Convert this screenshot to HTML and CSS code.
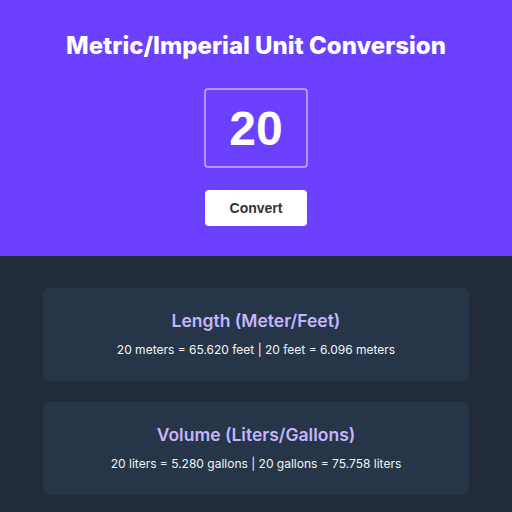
FILE: index.html
```html
<!DOCTYPE html>
<html>
<head>
<meta charset="utf-8">
<link rel="stylesheet" href="styles.css">
</head>
<body>
<header class="hero">
  <h1 class="title">Metric/Imperial Unit Conversion</h1>
  <input class="num" type="text" value="20">
  <button class="btn">Convert</button>
</header>
<main class="results">
  <section class="card">
    <h2 class="card-title">Length (Meter/Feet)</h2>
    <p class="card-text">20 meters = 65.620 feet | 20 feet = 6.096 meters</p>
  </section>
  <section class="card">
    <h2 class="card-title">Volume (Liters/Gallons)</h2>
    <p class="card-text">20 liters = 5.280 gallons | 20 gallons = 75.758 liters</p>
  </section>
</main>
</body>
</html>
```
FILE: styles.css
```css
html, body {
  margin: 0;
  padding: 0;
  background: #222b3a;
  font-family: Inter, "Noto Sans", sans-serif;
}
.hero {
  background: #6c40ff;
  height: 256px;
  box-sizing: border-box;
  padding-top: 31px;
  display: flex;
  flex-direction: column;
  align-items: center;
}
.title {
  margin: 0;
  color: #fff;
  font-size: 24px;
  font-weight: 800;
  line-height: 30px;
}
.num {
  margin-top: 27px;
  width: 104px;
  height: 80px;
  box-sizing: border-box;
  background: transparent;
  border: 2px solid rgba(255,255,255,0.45);
  border-radius: 4px;
  color: #fff;
  text-align: center;
  font-family: "Liberation Sans", Arial, sans-serif;
  font-weight: 700;
  font-size: 48px;
  padding: 0;
  outline: none;
}
.btn {
  margin-top: 22px;
  width: 102px;
  height: 36px;
  background: #fff;
  border: none;
  border-radius: 4px;
  color: #333;
  font-family: "Liberation Sans", Arial, sans-serif;
  font-weight: 700;
  font-size: 14px;
}
.results {
  padding: 32px 43px;
  display: flex;
  flex-direction: column;
  gap: 21px;
}
.card {
  background: #273548;
  border-radius: 5px;
  height: 93px;
  box-sizing: border-box;
  padding-top: 22px;
  text-align: center;
}
.card-title {
  margin: 0;
  color: #c4b5fd;
  font-size: 17.5px;
  font-weight: 600;
  line-height: 22px;
}
.card-text {
  margin: 9px 0 0;
  color: #f1f5f9;
  font-size: 12px;
  line-height: 18px;
}
```
